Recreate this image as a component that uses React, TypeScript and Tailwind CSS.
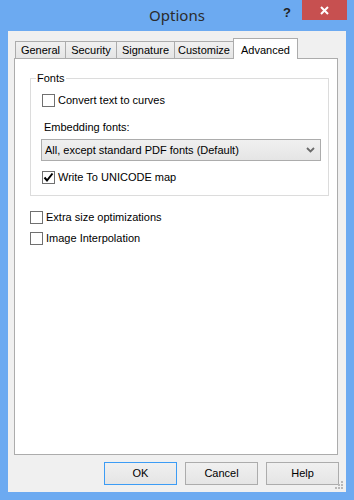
import React from 'react';

const tabs = [
  { label: 'General', w: 'w-[51px]' },
  { label: 'Security', w: 'w-[52px]' },
  { label: 'Signature', w: 'w-[59px]' },
  { label: 'Customize', w: 'w-[60px]' },
];

const Check = ({ checked }: { checked?: boolean }) => (
  <span className="w-[13px] h-[13px] border border-[#707070] bg-white flex items-center justify-center shrink-0">
    {checked && (
      <svg width="11" height="11" viewBox="0 0 11 11">
        <path d="M1.5 5.5 L4 8.5 L9.5 1.5" fill="none" stroke="#000" strokeWidth="2" />
      </svg>
    )}
  </span>
);

const CheckRow = ({ label, checked, className }: { label: string; checked?: boolean; className?: string }) => (
  <div className={`flex items-center gap-[3px] h-[13px] ${className ?? ''}`}>
    <Check checked={checked} />
    <span className="leading-[13px]">{label}</span>
  </div>
);

const Button = ({ label, primary }: { label: string; primary?: boolean }) => (
  <button
    className={`w-[73px] h-[23px] flex items-center justify-center bg-gradient-to-b from-[#f0f0f0] to-[#e5e5e5] border ${
      primary ? 'border-[#3c9cf5]' : 'border-[#acacac]'
    } text-black`}
  >
    {label}
  </button>
);

export default function App() {
  return (
    <div
      className="w-[354px] h-[500px] bg-[#6caaf1] flex flex-col text-[11px] text-black"
      style={{ fontFamily: '"Liberation Sans", Arial, sans-serif' }}
    >
      {/* Title bar */}
      <div className="h-[31px] relative flex items-center justify-center pb-[1px]">
        <span className="text-[15px] text-[#2b2b2b]" style={{ fontFamily: '"Noto Sans", "Open Sans", sans-serif' }}>
          Options
        </span>
        <span className="absolute left-[283px] top-[3px] text-[13px] font-bold text-[#222]">?</span>
        <div className="absolute top-0 right-[7px] w-[45px] h-[20px] bg-[#c75050] flex items-center justify-center">
          <svg width="9" height="9" viewBox="0 0 9 9">
            <path d="M1 1 L8 8 M8 1 L1 8" stroke="#fff" strokeWidth="2" />
          </svg>
        </div>
      </div>

      {/* Client area */}
      <div className="mx-[8px] mb-[8px] flex-1 bg-[#f0f0f0] flex flex-col pl-[6px] pr-[8px] pt-[7px] relative">
        {/* Tabs */}
        <div className="flex items-end h-[20px] pl-[1px]">
          {tabs.map((t, i) => (
            <div
              key={t.label}
              className={`${t.w} h-[17px] border border-b-0 border-[#acacac] bg-gradient-to-b from-[#f0f0f0] to-[#e5e5e5] flex items-center justify-center ${
                i > 0 ? '-ml-px' : ''
              }`}
            >
              {t.label}
            </div>
          ))}
          <div className="w-[65px] h-[21px] -ml-px -mb-px border border-b-0 border-[#acacac] bg-white relative z-10 flex justify-center pt-[3px]">
            Advanced
          </div>
        </div>

        {/* Panel */}
        <div className="h-[397px] border border-[#acacac] bg-white flex flex-col">
          <div className="mt-[19px] ml-[15px] mr-[8px] border border-[#dcdcdc] relative pt-[15px] pb-[11px]">
            <span className="absolute -top-[8px] left-[5px] px-[1px] bg-white leading-[14px]">Fonts</span>
            <CheckRow label="Convert text to curves" className="ml-[11px]" />
            <div className="ml-[13px] mt-[14px] leading-[13px]">Embedding fonts:</div>
            <div className="ml-[10px] mr-[7px] mt-[5px] h-[22px] border border-[#acacac] bg-gradient-to-b from-[#f0f0f0] to-[#e5e5e5] flex items-center justify-between pl-[3px] pr-[5px]">
              <span>All, except standard PDF fonts (Default)</span>
              <svg width="9" height="6" viewBox="0 0 9 6">
                <path d="M1 1 L4.5 4.5 L8 1" fill="none" stroke="#6a6a6a" strokeWidth="1.8" />
              </svg>
            </div>
            <CheckRow label="Write To UNICODE map" checked className="ml-[11px] mt-[10px]" />
          </div>
          <CheckRow label="Extra size optimizations" className="ml-[15px] mt-[15px]" />
          <CheckRow label="Image Interpolation" className="ml-[15px] mt-[8px]" />
        </div>

        {/* Buttons */}
        <div className="flex justify-end gap-[8px] mt-[7px] -mr-px">
          <Button label="OK" primary />
          <Button label="Cancel" />
          <Button label="Help" />
        </div>

        {/* Size grip */}
        <svg className="absolute right-[3px] bottom-[3px]" width="8" height="8" viewBox="0 0 8 8">
          <rect x="6" y="0" width="2" height="2" fill="#b8b8b8" />
          <rect x="3" y="3" width="2" height="2" fill="#b8b8b8" />
          <rect x="6" y="3" width="2" height="2" fill="#b8b8b8" />
          <rect x="0" y="6" width="2" height="2" fill="#b8b8b8" />
          <rect x="3" y="6" width="2" height="2" fill="#b8b8b8" />
          <rect x="6" y="6" width="2" height="2" fill="#b8b8b8" />
        </svg>
      </div>
    </div>
  );
}
